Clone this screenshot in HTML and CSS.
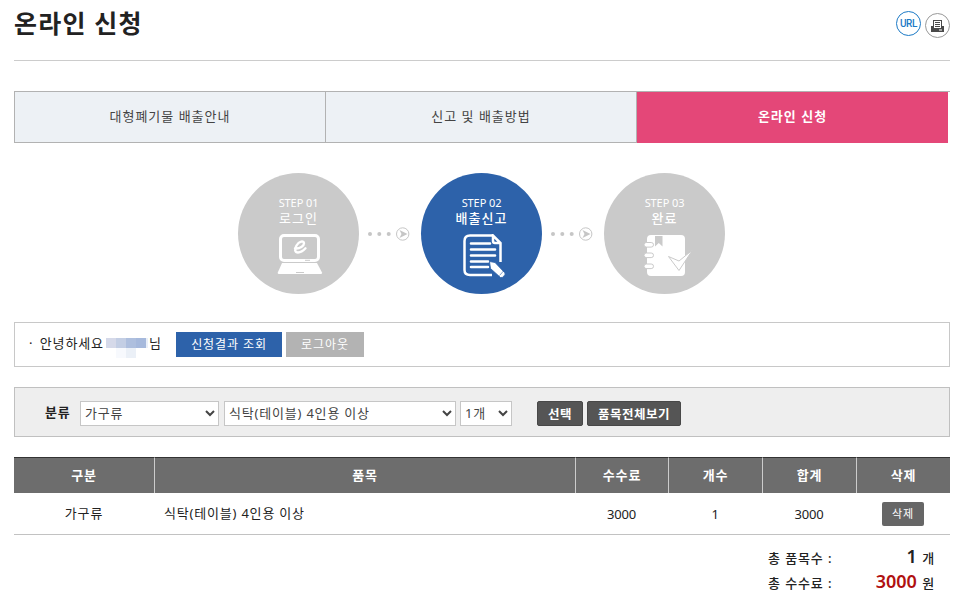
FILE: index.html
```html
<!DOCTYPE html>
<html lang="ko">
<head>
<meta charset="utf-8">
<title>온라인 신청</title>
<link rel="stylesheet" href="styles.css">
</head>
<body>
<main class="page">
  <header class="head">
    <h1>온라인 신청</h1>
    <div class="tools">
      <a class="tool url">URL</a>
      <a class="tool print">
        <svg width="13" height="12" viewBox="0 0 13 12"><path fill="#4a4a4a" d="M2 0h9v6h2v6H0V6h2z"/><path fill="#fff" d="M3 1h7v7H3zM8 9.500h3v1H8z"/><path stroke="#4a4a4a" d="M4 2.500h5M4 4.500h5M4 6.500h5"/></svg>
      </a>
    </div>
  </header>

  <nav class="tabs">
    <a class="tab">대형폐기물 배출안내</a>
    <a class="tab">신고 및 배출방법</a>
    <a class="tab on">온라인 신청</a>
  </nav>

  <section class="steps">
    <div class="step">
      <span class="no">STEP 01</span><span class="name light">로그인</span>
      <svg class="laptop" width="46" height="42" viewBox="0 0 46 42">
        <rect x="3.500" y="1.500" width="38" height="25" rx="3.500" fill="none" stroke="#fff" stroke-width="3"/>
        <path fill="#fff" d="M5 29h35l5 9.500q.4 1.500-1.200 1.500H2q-1.600 0-1.200-1.500z"/>
        <path d="M28 26.300h5M19 38.500h8" stroke="#cacaca" stroke-width="1"/>
        <path d="M18 14.500c5 .5 9-2.500 9-5.200 0-3-5-2-7.500 2.200-2.500 4-1.500 7 1.500 7 3 0 5.500-2 7.500-4.200" fill="none" stroke="#fff" stroke-width="2.400" stroke-linecap="round"/>
      </svg>
    </div>
    <svg class="next" width="62" height="16" viewBox="0 0 62 16"><g fill="#c6c6c6"><circle cx="11" cy="8" r="2"/><circle cx="20.300" cy="8" r="2"/><circle cx="29.700" cy="8" r="2"/><path d="M40.500 4l8 4-8 4 2-4z"/></g><circle cx="43.700" cy="8" r="6.200" fill="none" stroke="#c6c6c6"/></svg>
    <div class="step on">
      <span class="no">STEP 02</span><span class="name">배출신고</span>
      <svg class="doc" width="46" height="44" viewBox="0 0 46 44">
        <path d="M31 1.500H8Q2.500 1.500 2.500 7v29q0 5 5.500 5h22M38.500 28V9L31 1.500V7q0 2 2 2h5" fill="none" stroke="#fff" stroke-width="2.500"/>
        <path d="M9 9.500h19M9 15.500h24M9 21.500h24M9 27.500h17M9 33h17" stroke="#fff" stroke-width="2.600" stroke-linecap="round"/>
        <path d="M27.500 27.500l1 7 10 9q2 .5 3.500-1.500 2-2 .5-3.500L33 28.500z" fill="#fff" stroke="#2d62aa" stroke-width=".8"/>
        <path d="M37.500 41.500l4-4.500" stroke="#2d62aa" stroke-width=".6"/>
      </svg>
    </div>
    <svg class="next" width="62" height="16" viewBox="0 0 62 16"><g fill="#c6c6c6"><circle cx="11" cy="8" r="2"/><circle cx="20.300" cy="8" r="2"/><circle cx="29.700" cy="8" r="2"/><path d="M40.500 4l8 4-8 4 2-4z"/></g><circle cx="43.700" cy="8" r="6.200" fill="none" stroke="#c6c6c6"/></svg>
    <div class="step">
      <span class="no">STEP 03</span><span class="name">완료</span>
      <svg class="book" width="50" height="44" viewBox="0 0 50 44">
        <rect x="4" y="1" width="38" height="41" rx="4" fill="#fff"/>
        <path fill="#cacaca" d="M12 2h7.500v10.500l-3.700-3.500-3.800 3.500z"/>
        <g fill="#fff" stroke="#cacaca"><rect x="1" y="8.500" width="9.500" height="4.600" rx="2.300"/><rect x="1" y="19" width="9.500" height="4.600" rx="2.300"/><rect x="1" y="30" width="9.500" height="4.600" rx="2.300"/>
        <path d="M25.500 22.500l10.500 4.500L49.500 16 36 36.500z"/></g>
      </svg>
    </div>
  </section>

  <section class="greet">
    <span class="hello">· 안녕하세요</span>
    <svg class="mask" width="43" height="22" viewBox="0 0 43 22"><path fill="#d5d9e9" d="M0 1h10v10H0z"/><path fill="#c3cee4" d="M10 1h10v10H10z"/><path fill="#aebfde" d="M20 1h10v10H20z"/><path fill="#a6b9dc" d="M30 1h10v10H30z"/><path fill="#e9eff8" d="M40 1h2v10h-2z"/><path fill="#f7f9fd" d="M10 11h10v10H10z"/><path fill="#ebf0f7" d="M20 11h10v10H20z"/></svg>
    <span class="nim">님</span>
    <a class="btn blue">신청결과 조회</a>
    <a class="btn gray">로그아웃</a>
  </section>

  <form class="filter">
    <label>분류</label>
    <select class="s1"><option>가구류</option></select>
    <select class="s2"><option>식탁(테이블) 4인용 이상</option></select>
    <select class="s3"><option>1개</option></select>
    <button type="button" class="dark b1">선택</button>
    <button type="button" class="dark b2">품목전체보기</button>
  </form>

  <table>
    <colgroup><col class="c1"><col class="c2"><col class="c3"><col class="c4"><col class="c4"><col class="c4"></colgroup>
    <thead><tr><th>구분</th><th>품목</th><th>수수료</th><th>개수</th><th>합계</th><th>삭제</th></tr></thead>
    <tbody><tr><td>가구류</td><td class="left">식탁(테이블) 4인용 이상</td><td class="num">3000</td><td class="num">1</td><td class="num">3000</td><td><a class="del">삭제</a></td></tr></tbody>
  </table>

  <dl class="total">
    <dt>총 품목수 :</dt><dd><b>1</b> 개</dd>
    <dt>총 수수료 :</dt><dd><b class="red">3000</b> 원</dd>
  </dl>
</main>
</body>
</html>
```
FILE: styles.css
```css
* { box-sizing: border-box; }
body {
  margin: 0;
  background: #fff;
  color: #222;
  font: 13px/20px "Noto Sans", "Noto Sans CJK KR", sans-serif;
  letter-spacing: .9px;
}
.page { width: 936px; margin: 0 19px 0 14px; }

.head {
  display: flex;
  justify-content: space-between;
  height: 61px;
  border-bottom: 1px solid #ccc;
}
h1 { margin: 7px 0 0; font-size: 25px; line-height: 32px; font-weight: 700; letter-spacing: 1.2px; }
.tools { display: flex; gap: 4px; padding-top: 11px; }
.tool {
  display: flex;
  align-items: center;
  justify-content: center;
  width: 25px;
  height: 25px;
  border: 1px solid #1c7ac6;
  border-radius: 50%;
}
.url { color: #1c7ac6; font: 500 10px/24px Roboto, sans-serif; letter-spacing: -.4px; }
.print { margin-top: 2px; border-color: #999; }

.tabs { display: flex; height: 52px; margin-top: 30px; border-top: 1px solid #b2b2b2; }
.tab {
  width: 311px;
  border: 1px solid #b2b2b2;
  border-width: 0 0 1px 1px;
  background: #edf1f5;
  color: #444;
  line-height: 49px;
  letter-spacing: 1px;
  text-align: center;
}
.tab.on { width: 312px; background: #e44778; border-bottom: 0; color: #fff; font-weight: 700; }

.steps { display: flex; align-items: center; margin: 30px 0 0 224px; height: 121px; }
.step {
  display: flex;
  flex-direction: column;
  align-items: center;
  width: 121px;
  height: 121px;
  padding-top: 23px;
  border-radius: 50%;
  background: #cacaca;
  color: #fff;
}
.step.on { background: #2d62aa; }
.no { font-size: 11px; line-height: 14px; letter-spacing: -.1px; }
.name { font-size: 13px; line-height: 16px; letter-spacing: 1.1px; font-weight: 500; margin-bottom: 7px; }
.name.light { font-weight: 400; }
.step > svg { flex: none; }
.laptop { margin: 1px 0 0 3px; }
.doc { margin: 1px 0 0 6px; }
.book { margin: 1px 0 0 7px; }
.next { flex: none; }

.greet {
  display: flex;
  align-items: center;
  height: 45px;
  margin-top: 28px;
  padding-left: 14px;
  border: 1px solid #c8c8c8;
}
.hello { width: 77px; margin-top: -3px; white-space: nowrap; word-spacing: 2px; }
.mask { margin-top: 7px; }
.nim { width: 27px; margin-top: -3px; }
.btn { height: 25px; color: #fff; font-size: 12px; line-height: 25px; text-align: center; }
.blue { width: 106px; background: #2d62aa; }
.gray { width: 78px; margin-left: 4px; background: #b3b3b3; }

.filter {
  display: flex;
  align-items: flex-start;
  height: 50px;
  margin-top: 20px;
  padding: 13px 0 0 30px;
  border: 1px solid #c0c0c0;
  background: #eee;
}
label { width: 35px; font-weight: 700; line-height: 22px; letter-spacing: .7px; }
select {
  height: 25px;
  padding: 0 0 1px;
  border: 1px solid #c6c6c6;
  border-radius: 0;
  background: #fff;
  color: #444;
  font: inherit;
  letter-spacing: .8px;
}
.s1 { width: 139px; margin-right: 5px; }
.s2 { width: 232px; margin-right: 4px; }
.s3 { width: 52px; margin-right: 25px; }
.dark {
  height: 25px;
  padding: 0;
  border: 1px solid #484848;
  border-radius: 2px;
  background: #555;
  color: #fff;
  font: 700 12.500px/22px "Noto Sans CJK KR", sans-serif;
  letter-spacing: .5px;
}
.b1 { width: 46px; margin-right: 4px; }
.b2 { width: 94px; }

table { width: 936px; margin-top: 20px; border-collapse: separate; border-spacing: 0; table-layout: fixed; }
.c1 { width: 140px; }
.c2 { width: 421px; }
.c3 { width: 93px; }
.c4 { width: 94px; }
th { height: 36px; padding: 0 0 2px; border-top: 1px solid #333; border-left: 1px solid #ccc; background: #6d6d6d; color: #fff; font-weight: 700; }
th:first-child { border-left: 0; }
td { height: 42px; padding: 0 0 1px; border-bottom: 1px solid #c2c2c2; text-align: center; }
td.left { padding-left: 10px; text-align: left; letter-spacing: .8px; }
td.num { padding: 0; letter-spacing: -.2px; }
.del { display: block; width: 42px; height: 24px; margin: 1px auto 0; border-radius: 2px; background: #666; color: #fff; font-size: 11px; line-height: 23px; }

.total { display: grid; grid-template-columns: 85px 82px; grid-auto-rows: 25px; justify-content: end; margin: 11px 15px 0 0; line-height: 25px; font-weight: 500; }
dd { margin: 0; text-align: right; }
.total b { font-size: 18px; line-height: 20px; font-weight: 600; letter-spacing: 0; margin-right: 1px; }
.red { color: #b01010; }
```
